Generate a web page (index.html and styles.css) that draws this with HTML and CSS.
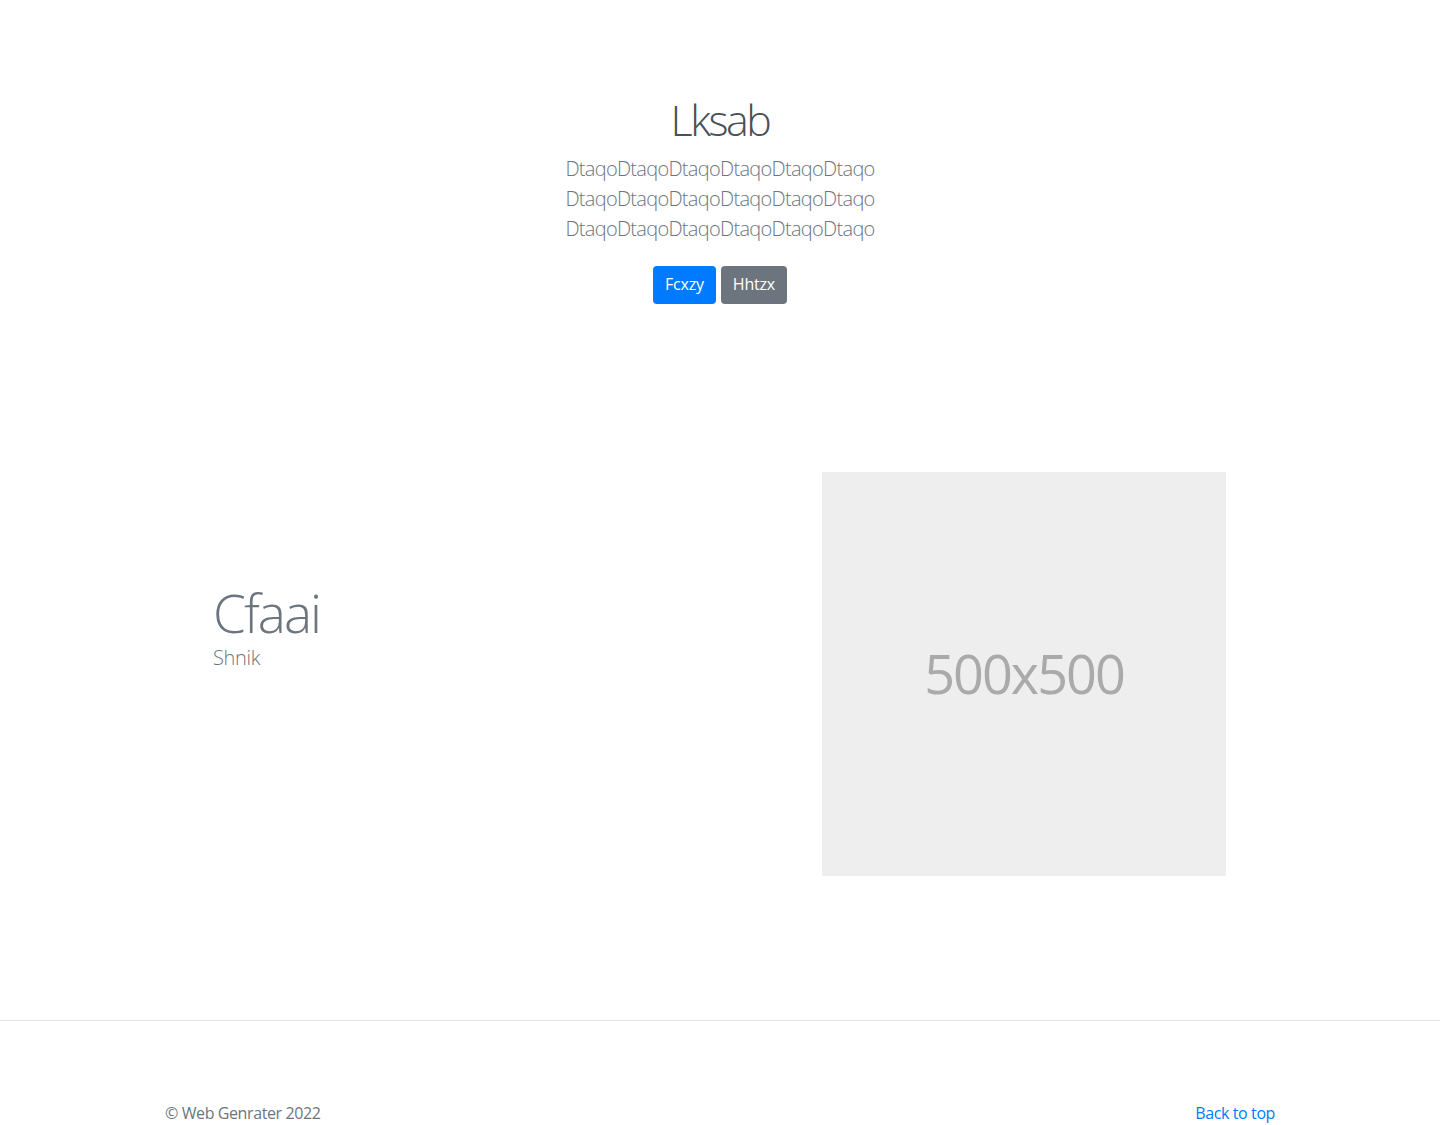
FILE: index.html
```html
<!DOCTYPE html>
<html lang="en">
<head>
<meta charset="utf-8">
<title>Lksab</title>
<link rel="stylesheet" href="styles.css">
</head>
<body>
<main>
  <section class="hero">
    <h1 class="hero-title">Lksab</h1>
    <p class="lead">DtaqoDtaqoDtaqoDtaqoDtaqoDtaqo<br>DtaqoDtaqoDtaqoDtaqoDtaqoDtaqo<br>DtaqoDtaqoDtaqoDtaqoDtaqoDtaqo</p>
    <div class="actions">
      <a class="btn btn-primary" href="#">Fcxzy</a>
      <a class="btn btn-secondary" href="#">Hhtzx</a>
    </div>
  </section>
  <section class="feature">
    <div class="feature-text">
      <h2 class="feature-title">Cfaai</h2>
      <p class="feature-sub">Shnik</p>
    </div>
    <div class="placeholder">500x500</div>
  </section>
</main>
<footer class="footer">
  <div class="footer-inner">
    <p class="copy">© Web Genrater 2022</p>
    <a class="back" href="#">Back to top</a>
  </div>
</footer>
</body>
</html>
```

FILE: styles.css
```css
* { box-sizing: border-box; }
html, body { margin: 0; padding: 0; }
body {
  font-family: "Open Sans", "Noto Sans", sans-serif;
  font-size: 16px;
  line-height: 1.5;
  color: #212529;
  background: #fff;
}
.hero {
  text-align: center;
  padding-top: 94px;
}
.hero-title {
  margin: 0 0 8px;
  font-size: 43px;
  font-weight: 300;
  line-height: 52px;
  color: #495057;
  letter-spacing: -2.5px;
}
.lead {
  margin: 0 0 22px;
  font-size: 20px;
  font-weight: 300;
  line-height: 30px;
  color: #6c757d;
  letter-spacing: -0.7px;
}
.actions {
  display: flex;
  justify-content: center;
  gap: 5px;
}
.btn {
  display: inline-block;
  height: 38px;
  padding: 6px 12px;
  font-size: 16px;
  line-height: 25px;
  border-radius: 4px;
  color: #fff;
  text-decoration: none;
  letter-spacing: -0.2px;
}
.btn-primary { background: #007bff; }
.btn-secondary { background: #6c757d; }
.feature {
  width: 1140px;
  margin: 168px auto 0;
  padding: 0 64px 0 63px;
  display: flex;
  align-items: center;
  justify-content: space-between;
}
.feature-text { padding-bottom: 96px; }
.feature-title {
  margin: 0;
  font-size: 53px;
  font-weight: 300;
  line-height: 64px;
  color: #6c757d;
  letter-spacing: -2px;
}
.feature-sub {
  margin: 0;
  font-size: 20px;
  font-weight: 300;
  line-height: 26px;
  color: #6c757d;
  letter-spacing: -0.3px;
}
.placeholder {
  width: 404px;
  height: 404px;
  background: #eee;
  color: #aaa;
  display: flex;
  align-items: center;
  justify-content: center;
  font-size: 54px;
  letter-spacing: -2px;
  padding-bottom: 2px;
}
.footer {
  margin-top: 144px;
  border-top: 1px solid #e5e5e5;
  padding: 80px 0 48px;
}
.footer-inner {
  width: 1140px;
  margin: 0 auto;
  padding: 0 15px;
  display: flex;
  justify-content: space-between;
  align-items: baseline;
}
.copy { margin: 0; color: #6c757d; letter-spacing: -0.4px; }
.back { color: #007bff; text-decoration: none; letter-spacing: -0.4px; }
```
